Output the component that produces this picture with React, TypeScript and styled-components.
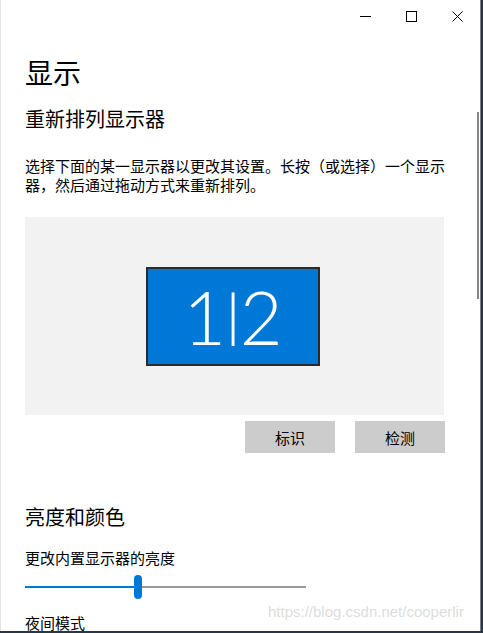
import React from 'react';
import styled, { createGlobalStyle } from 'styled-components';

const GlobalStyle = createGlobalStyle`
  html, body {
    margin: 0;
    padding: 0;
    background: #2b3644;
    overflow: hidden;
  }
  * {
    box-sizing: border-box;
  }
`;

const cjk = `"Noto Sans CJK SC", "Noto Sans", sans-serif`;

const App: React.FC = () => {
  return (
    <>
      <GlobalStyle />
      <Window>
        <TitleBar>
          <CaptionButton aria-label="minimize">
            <svg width="11" height="11" viewBox="0 0 11 11">
              <line x1="0" y1="5.5" x2="11" y2="5.5" stroke="#000" strokeWidth="1" />
            </svg>
          </CaptionButton>
          <CaptionButton aria-label="maximize">
            <svg width="11" height="11" viewBox="0 0 11 11">
              <rect x="0.5" y="0.5" width="10" height="10" fill="none" stroke="#000" strokeWidth="1" />
            </svg>
          </CaptionButton>
          <CaptionButton aria-label="close">
            <svg width="11" height="11" viewBox="0 0 11 11">
              <path d="M0.5 0.5 L10.5 10.5 M10.5 0.5 L0.5 10.5" stroke="#000" strokeWidth="1" />
            </svg>
          </CaptionButton>
        </TitleBar>

        <Content>
          <PageTitle>显示</PageTitle>
          <SectionTitle>重新排列显示器</SectionTitle>
          <Description>
            选择下面的某一显示器以更改其设置。长按（或选择）一个显示器，然后通过拖动方式来重新排列。
          </Description>

          <Arrangement>
            <Monitor>
              1<Divider>|</Divider>2
            </Monitor>
          </Arrangement>

          <ButtonRow>
            <ActionButton>标识</ActionButton>
            <ActionButton>检测</ActionButton>
          </ButtonRow>

          <SectionTitle $top={50}>亮度和颜色</SectionTitle>
          <Label>更改内置显示器的亮度</Label>
          <Slider>
            <Track $fill="#0078d7" style={{ width: 109 }} />
            <Thumb />
            <Track $fill="#999999" style={{ flex: 1 }} />
          </Slider>
          <Label $top={14}>夜间模式</Label>
        </Content>

        <ScrollThumb />
        <Watermark>https://blog.csdn.net/cooperlir</Watermark>
      </Window>
    </>
  );
};

export default App;

const Window = styled.div`
  position: relative;
  width: 481px;
  height: 631px;
  background: #ffffff;
  border-left: 1px solid #e2e2e8;
  border-right: 1px solid #7d7d7d;
  overflow: hidden;
  display: flex;
  flex-direction: column;
  font-family: ${cjk};
  color: #000;
`;

const TitleBar = styled.div`
  height: 32px;
  display: flex;
  justify-content: flex-end;
  flex-shrink: 0;
`;

const CaptionButton = styled.div`
  width: 46px;
  height: 32px;
  display: flex;
  align-items: center;
  justify-content: center;
`;

const Content = styled.div`
  padding-left: 24px;
  display: flex;
  flex-direction: column;
  align-items: flex-start;
`;

const PageTitle = styled.h1`
  margin: 20px 0 0;
  font-size: 28px;
  font-weight: 400;
  line-height: 40px;
`;

const SectionTitle = styled.h2<{ $top?: number }>`
  margin: ${({ $top }) => $top ?? 13}px 0 0;
  font-size: 20px;
  font-weight: 400;
  line-height: 28px;
`;

const Description = styled.p`
  margin: 23px 0 0;
  width: 430px;
  font-size: 15px;
  line-height: 19px;
`;

const Arrangement = styled.div`
  margin-top: 23px;
  width: 419px;
  height: 198px;
  background: #f2f2f2;
  display: flex;
  align-items: center;
  justify-content: center;
  padding-right: 3px;
`;

const Monitor = styled.div`
  width: 174px;
  height: 99px;
  background: #0078d7;
  border: 2px solid #2b2b2b;
  color: #ffffff;
  font-family: Lato, "Open Sans", sans-serif;
  font-weight: 300;
  font-size: 74px;
  line-height: 95px;
  text-align: center;
  letter-spacing: -4px;
  padding-right: 4px;
`;

const Divider = styled.span`
  display: inline-block;
  transform: scaleY(0.78) translateY(-4px);
  margin: 0 2px;
`;

const ButtonRow = styled.div`
  margin-top: 6px;
  width: 420px;
  display: flex;
  justify-content: flex-end;
  gap: 20px;
`;

const ActionButton = styled.button`
  width: 90px;
  height: 32px;
  border: none;
  background: #cccccc;
  font-family: ${cjk};
  font-size: 15px;
  color: #000;
  padding: 0;
`;

const Label = styled.div<{ $top?: number }>`
  margin-top: ${({ $top }) => $top ?? 17}px;
  font-size: 15px;
  line-height: 20px;
`;

const Slider = styled.div`
  margin-top: 7px;
  width: 281px;
  height: 24px;
  display: flex;
  align-items: center;
`;

const Track = styled.div<{ $fill: string }>`
  height: 2px;
  background: ${({ $fill }) => $fill};
`;

const Thumb = styled.div`
  width: 8px;
  height: 24px;
  border-radius: 4px;
  background: #0078d7;
  flex-shrink: 0;
`;

const ScrollThumb = styled.div`
  position: absolute;
  left: 476px;
  top: 112px;
  width: 2px;
  height: 187px;
  background: #858585;
`;

const Watermark = styled.div`
  position: absolute;
  left: 267px;
  top: 602px;
  font-family: "Liberation Sans", Arial, sans-serif;
  font-size: 15px;
  line-height: 20px;
  color: rgba(205, 205, 205, 0.7);
  white-space: nowrap;
`;
